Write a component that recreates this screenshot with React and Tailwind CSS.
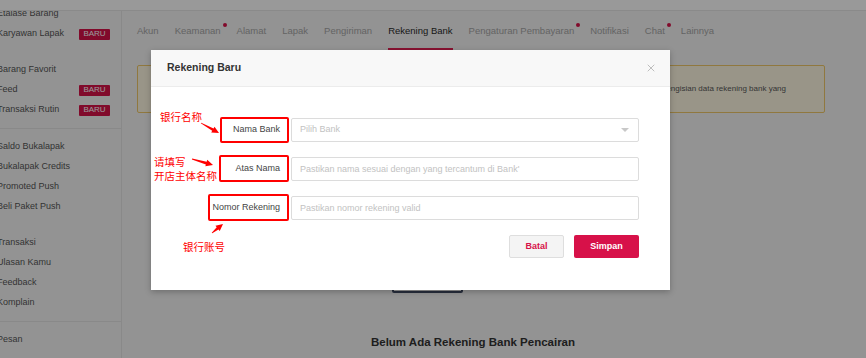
import { X } from "lucide-react";

const sections = [
  { items: [{ label: "Etalase Barang" }, { label: "Karyawan Lapak", badge: true }], after: "space" },
  {
    items: [{ label: "Barang Favorit" }, { label: "Feed", badge: true }, { label: "Transaksi Rutin", badge: true }],
    after: "divider",
  },
  {
    items: [{ label: "Saldo Bukalapak" }, { label: "Bukalapak Credits" }, { label: "Promoted Push" }, { label: "Beli Paket Push" }],
    after: "space",
  },
  { items: [{ label: "Transaksi" }, { label: "Ulasan Kamu" }, { label: "Feedback" }, { label: "Komplain" }], after: "divider" },
  { items: [{ label: "Pesan" }] },
];

const tabs = [
  { label: "Akun" },
  { label: "Keamanan", dot: true },
  { label: "Alamat" },
  { label: "Lapak" },
  { label: "Pengiriman" },
  { label: "Rekening Bank", active: true },
  { label: "Pengaturan Pembayaran", dot: true },
  { label: "Notifikasi" },
  { label: "Chat", dot: true },
  { label: "Lainnya" },
];

const font = { fontFamily: '"Liberation Sans", Arial, sans-serif' };
const cjk = { fontFamily: '"Noto Sans CJK SC", sans-serif' };

function Sidebar() {
  return (
    <aside className="w-[122px] shrink-0 border-r border-[#e4e4e4] overflow-hidden">
      <div className="-mt-[7px] -ml-[3px]">
        {sections.map((s, i) => (
          <div key={i}>
            {s.items.map((it) => (
              <div key={it.label} className="h-[20px] flex items-center justify-between pr-[11px] text-[9px] text-[#555]">
                <span>{it.label}</span>
                {it.badge && (
                  <span className="w-[31px] h-[11px] flex items-center justify-center bg-[#d71149] text-white text-[8px] rounded-[1px]">
                    BARU
                  </span>
                )}
              </div>
            ))}
            {s.after === "space" && <div className="h-[16px]" />}
            {s.after === "divider" && <div className="my-[8px] ml-[3px] h-px bg-[#e4e4e4]" />}
          </div>
        ))}
      </div>
    </aside>
  );
}

function Tabs() {
  return (
    <nav className="flex gap-4 h-[40px]">
      {tabs.map((t) => (
        <div
          key={t.label}
          className={`relative flex items-center text-[9.5px] whitespace-nowrap ${t.active ? "text-[#2b2b2b]" : "text-[#a6a6a6]"}`}
        >
          {t.label}
          {t.dot && <span className="absolute -right-[6px] top-[12px] w-[4px] h-[4px] rounded-full bg-[#d71149]" />}
          {t.active && <span className="absolute left-0 right-0 bottom-0 h-[3px] bg-[#e31e52]" />}
        </div>
      ))}
    </nav>
  );
}

function Arrow({ x1, y1, x2, y2 }) {
  const dx = x2 - x1;
  const dy = y2 - y1;
  const len = Math.hypot(dx, dy);
  const ux = dx / len;
  const uy = dy / len;
  const nx = -uy;
  const ny = ux;
  const hx = x2 - ux * 7;
  const hy = y2 - uy * 7;
  const pts = [
    [x1 + nx * 0.4, y1 + ny * 0.4],
    [hx + nx * 1.4, hy + ny * 1.4],
    [hx + nx * 3.4, hy + ny * 3.4],
    [x2, y2],
    [hx - nx * 3.4, hy - ny * 3.4],
    [hx - nx * 1.4, hy - ny * 1.4],
    [x1 - nx * 0.4, y1 - ny * 0.4],
  ];
  return <polygon points={pts.map((p) => p.join(",")).join(" ")} fill="#f00" />;
}

function Field({ label, children }) {
  return (
    <div className="flex items-center gap-[11px] h-[24px]">
      <label className="w-[113px] text-right text-[9px] text-[#444]">{label}</label>
      <div className="flex-1">{children}</div>
    </div>
  );
}

function Modal() {
  return (
    <div className="absolute left-[151px] top-[50px] w-[519px] bg-white shadow-[0_2px_6px_rgba(0,0,0,0.25)]" style={font}>
      <div className="h-[37px] flex items-center justify-between pl-[16px] pr-[13px] bg-[#f8f8f8] border-b border-[#ececec]">
        <h2 className="text-[10.5px] font-bold text-[#333]">Rekening Baru</h2>
        <X size={12} strokeWidth={1.5} className="text-[#aaa]" />
      </div>

      <div className="pl-[16px] pr-[31px] pt-[31px] pb-[32px] flex flex-col gap-[15px]">
        <Field label="Nama Bank">
          <div className="h-[24px] border border-[#dcdcdc] rounded-[2px] px-[8px] flex items-center justify-between text-[9px] text-[#c2c2c2]">
            <span>Pilih Bank</span>
            <span className="w-0 h-0 border-l-[4px] border-r-[4px] border-t-[4px] border-l-transparent border-r-transparent border-t-[#c8c8c8] mr-[1px]" />
          </div>
        </Field>
        <Field label="Atas Nama">
          <input
            className="block w-full h-[24px] border border-[#dcdcdc] rounded-[2px] px-[8px] text-[9px] outline-none placeholder:text-[#c2c2c2]"
            placeholder="Pastikan nama sesuai dengan yang tercantum di Bank'"
          />
        </Field>
        <Field label="Nomor Rekening">
          <input
            className="block w-full h-[24px] border border-[#dcdcdc] rounded-[2px] px-[8px] text-[9px] outline-none placeholder:text-[#c2c2c2]"
            placeholder="Pastikan nomor rekening valid"
          />
        </Field>
        <div className="flex justify-end gap-[10px]">
          <button className="w-[55px] h-[23px] bg-[#f4f4f4] border border-[#dedede] rounded-[2px] text-[9px] font-bold text-[#d71149]">
            Batal
          </button>
          <button className="w-[65px] h-[23px] bg-[#d71149] rounded-[2px] text-[9px] font-bold text-white">Simpan</button>
        </div>
      </div>

      {/* screenshot annotations */}
      <div className="absolute left-[69px] top-[67px] w-[69px] h-[26px] border-2 border-[#f00] rounded-[2px]" />
      <div className="absolute left-[68px] top-[105px] w-[70px] h-[27px] border-2 border-[#f00] rounded-[2px]" />
      <div className="absolute left-[57px] top-[144px] w-[81px] h-[27px] border-2 border-[#f00] rounded-[2px]" />
      <div className="absolute left-[9px] top-[60px] text-[10.5px] leading-[14px] text-[#f00]" style={cjk}>银行名称</div>
      <div className="absolute left-[3px] top-[105px] text-[10.5px] leading-[14px] text-[#f00]" style={cjk}>
        请填写
        <br />
        开店主体名称
      </div>
      <div className="absolute left-[32px] top-[190px] text-[10.5px] leading-[14px] text-[#f00]" style={cjk}>银行账号</div>
      <svg className="absolute inset-0 w-full h-full pointer-events-none">
        <Arrow x1={50} y1={73} x2={68} y2={83} />
        <Arrow x1={41} y1={109} x2={62} y2={115} />
        <Arrow x1={61} y1={183} x2={72} y2={174} />
      </svg>
    </div>
  );
}

export default function App() {
  return (
    <div className="relative w-full h-[358px] overflow-hidden bg-[#f5f5f5]" style={font}>
      <header className="h-[11px] bg-white border-b border-[#e6e6e6]" />
      <div className="flex h-[347px]">
        <Sidebar />
        <main className="flex-1 pl-[15px] pr-[41px]">
          <Tabs />
          <div className="mt-[14px] h-[48px] bg-[#fff8e3] border border-[#f0c96a] rounded-[2px] flex items-center justify-end pr-[38px] overflow-hidden">
            <p className="text-[8px] text-[#5a5a5a] whitespace-nowrap">
              Rekening bank digunakan untuk pencairan dana. Demi keamanan, pastikan kamu teliti dalam melakukan pengisian data rekening bank yang
            </p>
          </div>
          <div className="mt-[152px] ml-[255px] w-[71px] h-[28px] border-2 border-[#424c64] rounded-[2px]" />
          <div className="mr-[16px] mt-[41px] text-center text-[11.5px] font-bold text-[#333]">
            Belum Ada Rekening Bank Pencairan
          </div>
        </main>
      </div>
      <div className="absolute inset-0 bg-black/40" />
      <Modal />
    </div>
  );
}
